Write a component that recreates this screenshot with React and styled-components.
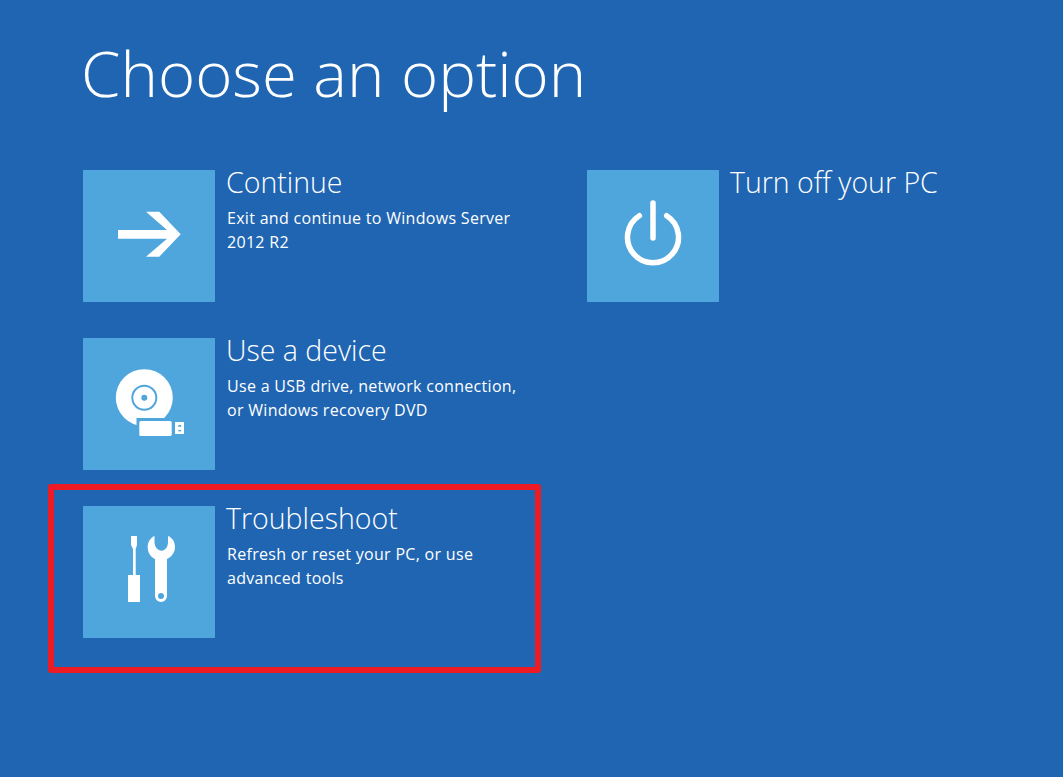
import styled, { createGlobalStyle } from 'styled-components';

const GlobalStyle = createGlobalStyle`
  html, body {
    margin: 0;
    padding: 0;
    background: #1f65b2;
  }
`;

const Page = styled.div`
  width: 1063px;
  height: 777px;
  box-sizing: border-box;
  padding: 33px 0 0 83px;
  background: #1f65b2;
  color: #fff;
  font-family: 'Open Sans', 'Noto Sans', sans-serif;
  overflow: hidden;
`;

const Heading = styled.h1`
  margin: 0 0 57px -2px;
  font-size: 63.5px;
  line-height: 80px;
  font-weight: 300;
`;

const Options = styled.div`
  display: grid;
  grid-template-columns: 504px 400px;
  grid-auto-rows: 132px;
  row-gap: 36px;
`;

const Option = styled.div`
  position: relative;
  display: flex;
  gap: 11px;

  ${(p) => p.$highlight && `
    &::after {
      content: '';
      position: absolute;
      left: -35px;
      top: -22px;
      width: 481px;
      height: 177px;
      border: 6px solid #ed1c24;
      border-radius: 3px;
    }
  `}
`;

const Tile = styled.div`
  flex: none;
  width: 132px;
  height: 132px;
  background: #4fa6dc;
`;

const Icon = styled.svg`
  display: block;
  width: 132px;
  height: 132px;
`;

const Text = styled.div`
  display: flex;
  flex-direction: column;
  width: 300px;
`;

const Title = styled.div`
  margin: -2px 0 10px;
  font-size: 28.5px;
  line-height: 28px;
  font-weight: 300;
`;

const Description = styled.div`
  padding-left: 1px;
  font-size: 16px;
  line-height: 24px;
  letter-spacing: 0.3px;
  font-weight: 400;
`;

const ArrowIcon = () => (
  <Icon viewBox="0 0 132 132">
    <path fill="#fff" d="M35 60H84L63 41.7H76.3L97.7 64.3L76.3 86.7H63L84 68.7H35Z" />
  </Icon>
);

const DeviceIcon = () => (
  <Icon viewBox="0 0 132 132">
    <circle cx="61.3" cy="59.7" r="28.5" fill="#fff" />
    <circle cx="61.3" cy="59.7" r="12" fill="none" stroke="#4fa6dc" strokeWidth="2" />
    <circle cx="61.3" cy="59.7" r="3" fill="#4fa6dc" />
    <rect x="53.5" y="80" width="43" height="20" fill="#4fa6dc" />
    <rect x="56.3" y="83" width="32.4" height="15" rx="1.5" fill="#fff" />
    <rect x="92" y="84" width="9" height="12" fill="#fff" />
    <rect x="95.3" y="87" width="2.8" height="1.8" fill="#4fa6dc" />
    <rect x="95.3" y="92" width="2.8" height="1.4" fill="#4fa6dc" />
  </Icon>
);

const ToolsIcon = () => (
  <Icon viewBox="0 0 132 132">
    <path fill="#fff" d="M48 30H54V39L52.7 43V69H57V96H45V69H50V43L48 39Z" />
    <path
      fill="#fff"
      fillRule="evenodd"
      d="M71.5 30C67 32 64.7 36.5 64.7 41C64.7 47 68 51 72 53V90A6 6 0 0 0 84 90V53C88 51 92 47 92 41C92 36.5 90 32 85 30V36C85 41 82 44.7 78.5 44.7C75 44.7 71.5 41 71.5 36ZM78 87A3 3 0 1 0 78 93A3 3 0 1 0 78 87Z"
    />
  </Icon>
);

const PowerIcon = () => (
  <Icon viewBox="0 0 132 132">
    <path
      fill="none"
      stroke="#fff"
      strokeWidth="5.5"
      strokeLinecap="round"
      d="M66 33V68M52.3 45.7A25.5 25.5 0 1 0 79.7 45.7"
    />
  </Icon>
);

const options = [
  {
    title: 'Continue',
    lines: ['Exit and continue to Windows Server', '2012 R2'],
    icon: <ArrowIcon />,
  },
  {
    title: 'Turn off your PC',
    lines: [],
    icon: <PowerIcon />,
  },
  {
    title: 'Use a device',
    lines: ['Use a USB drive, network connection,', 'or Windows recovery DVD'],
    icon: <DeviceIcon />,
  },
  null,
  {
    title: 'Troubleshoot',
    lines: ['Refresh or reset your PC, or use', 'advanced tools'],
    icon: <ToolsIcon />,
    highlight: true,
  },
];

export default function App() {
  return (
    <Page>
      <GlobalStyle />
      <Heading>Choose an option</Heading>
      <Options>
        {options.map((o, i) =>
          o ? (
            <Option key={i} $highlight={o.highlight}>
              <Tile>{o.icon}</Tile>
              <Text>
                <Title>{o.title}</Title>
                {o.lines.map((l) => (
                  <Description key={l}>{l}</Description>
                ))}
              </Text>
            </Option>
          ) : (
            <div key={i} />
          )
        )}
      </Options>
    </Page>
  );
}
